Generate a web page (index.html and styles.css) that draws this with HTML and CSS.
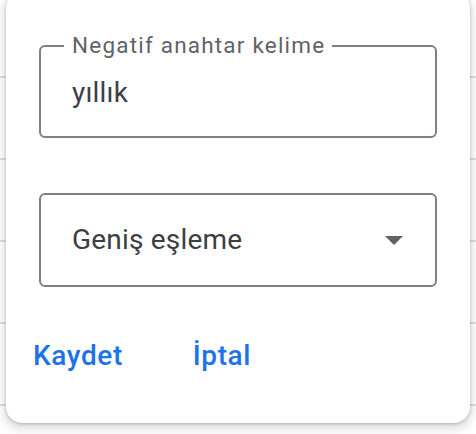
FILE: index.html
```html
<!DOCTYPE html>
<html lang="tr">
<head>
<meta charset="utf-8">
<link rel="stylesheet" href="styles.css">
</head>
<body>
<div class="page">
  <div class="card">
    <div class="field field-text">
      <span class="field-label">Negatif anahtar kelime</span>
      <span class="field-value">yıllık</span>
    </div>
    <div class="field field-select">
      <span class="field-value">Geniş eşleme</span>
      <svg class="arrow" width="18" height="9" viewBox="0 0 18 9"><path d="M0 0 L18 0 L9 9 Z" fill="#5f6368"/></svg>
    </div>
    <div class="actions">
      <button class="btn">Kaydet</button>
      <button class="btn">İptal</button>
    </div>
  </div>
</div>
</body>
</html>
```

FILE: styles.css
```css
html, body {
  margin: 0;
  padding: 0;
  width: 476px;
  height: 434px;
  overflow: hidden;
}
body {
  background: #ffffff repeating-linear-gradient(to bottom, transparent 0, transparent 76px, #dcdcdc 76px, #dcdcdc 78px, transparent 78px, transparent 82px);
  font-family: Roboto, "Noto Sans", sans-serif;
}
.page {
  padding-left: 6px;
}
.card {
  box-sizing: border-box;
  margin-top: -8px;
  width: 464px;
  height: 431px;
  background: #fff;
  border-radius: 16px;
  box-shadow: 0 1px 3px rgba(60,64,67,.3), 0 4px 8px 3px rgba(60,64,67,.15);
  padding: 53px 33px 0;
  display: flex;
  flex-direction: column;
}
.field {
  position: relative;
  box-sizing: border-box;
  border: 2px solid #7d8186;
  border-radius: 6px;
  display: flex;
  align-items: center;
  padding-left: 31px;
  padding-right: 32px;
}
.field-text {
  height: 93px;
}
.field-select {
  height: 94px;
  margin-top: 55px;
  justify-content: space-between;
}
.field-label {
  position: absolute;
  left: 23px;
  top: -15px;
  padding: 0 7px 0 8px;
  background: #fff;
  font-size: 22.5px;
  letter-spacing: 1.2px;
  line-height: 26px;
  color: #5f6368;
}
.field-value {
  font-size: 28px;
  line-height: 40px;
  color: #3c4043;
  letter-spacing: 0.2px;
}
.field-text .field-value {
  margin-top: 2px;
}
.arrow {
  display: block;
}
.actions {
  margin-top: 40px;
  margin-left: -20px;
  height: 56px;
  display: flex;
  gap: 42px;
}
.btn {
  border: 0;
  background: transparent;
  padding: 0 14px;
  height: 56px;
  font-family: Roboto, "Noto Sans", sans-serif;
  font-weight: 500;
  font-size: 28px;
  letter-spacing: 0.6px;
  color: #1a73e8;
}
```
